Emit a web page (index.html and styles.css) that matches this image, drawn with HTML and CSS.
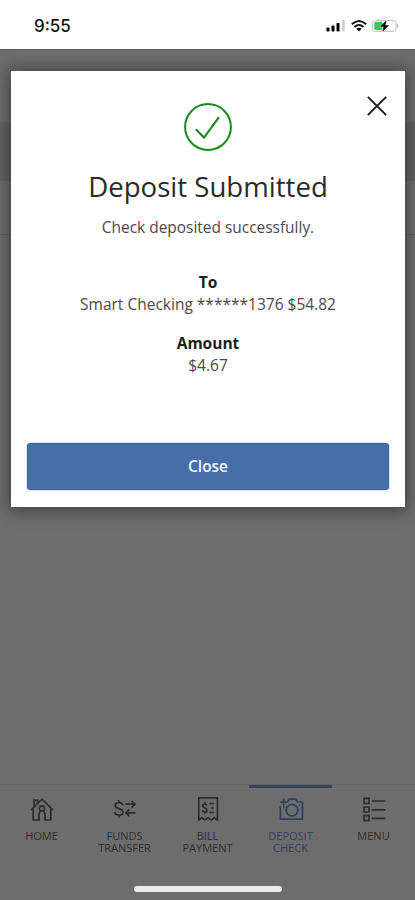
FILE: index.html
```
<!DOCTYPE html>
<html lang="en">
<head>
  <meta charset="UTF-8" />
  <meta name="viewport" content="width=device-width, initial-scale=1.0"/>
  <title>Deposit Check</title>
  <link rel="stylesheet" href="styles.css">
</head>
<body>
  <header class="status-bar">
    <span class="time">9:55</span>
    <div class="status-icons">
      <svg width="20" height="12" viewBox="0 0 20 12">
        <rect x="0.5" y="7.5" width="3" height="4" rx="0.8"/>
        <rect x="5.5" y="5.5" width="3" height="6" rx="0.8"/>
        <rect x="10.5" y="3" width="3" height="8.5" rx="0.8"/>
        <rect x="15.8" y="0" width="3" height="11.5" rx="0.8" fill="#d2d2d2"/>
      </svg>
      <svg width="16" height="12" viewBox="0 0 16 12">
        <g fill="none" stroke="#111" stroke-width="2">
          <path d="M0.8 4.3 Q8 -2.2 15.2 4.3"/>
          <path d="M3.4 7 Q8 2.9 12.6 7"/>
        </g>
        <path d="M5.3 8.8 Q8 6.8 10.7 8.8 L8 11.6 Z"/>
      </svg>
      <svg width="28" height="14" viewBox="0 0 28 14">
        <rect x="0.6" y="1.6" width="23.6" height="10.8" rx="3" fill="#fff" stroke="#bdbdbd" stroke-width="1"/>
        <path d="M25.2 4.8 Q27.6 7 25.2 9.2 Z" fill="#aaa"/>
        <rect x="2.3" y="3" width="8.5" height="8" rx="1.4" fill="#35c75a"/>
        <path d="M14.5 1.2 L8 7.8 H11.6 L10.4 12.8 L17 6.2 H13.3 Z" stroke="#fff" stroke-width="0.8" paint-order="stroke"/>
      </svg>
    </div>
  </header>

  <main class="page">
    <div class="page-head"></div>
    <div class="page-band"></div>
    <div class="page-row"></div>

    <section class="modal">
      <button class="modal-x" aria-label="Close">
        <svg width="20" height="20" viewBox="0 0 20 20" fill="none" stroke="#1c1c1c" stroke-width="1.9">
          <path d="M0.8 0.8 L19.2 19.2 M19.2 0.8 L0.8 19.2"/>
        </svg>
      </button>
      <svg class="check" width="48" height="48" viewBox="0 0 48 48" fill="none" stroke="#188a1b" stroke-width="2">
        <circle cx="24" cy="24" r="22.9"/>
        <path d="M11.8 26.3 L20 34.6 L35 14.2" stroke-width="2.1"/>
      </svg>
      <h1>Deposit Submitted</h1>
      <p class="message">Check deposited successfully.</p>
      <dl>
        <dt>To</dt>
        <dd>Smart Checking ******1376 $54.82</dd>
        <dt>Amount</dt>
        <dd>$4.67</dd>
      </dl>
      <button class="close-btn">Close</button>
    </section>
  </main>

  <nav class="tabs">
    <a class="tab">
      <svg width="26" height="26" viewBox="0 0 26 26">
        <path d="M2 14.2 L13 3.2 L24 14.2"/>
        <path d="M4.2 12.5 V24 H10 V17.5 M16 17.5 V24 H21.8 V12.5"/>
        <path d="M5 10.6 V4.2 H8.4 V7.4"/>
        <circle cx="13" cy="12.4" r="2.6"/>
        <path d="M11.2 15 L10 18 M14.8 15 L16 18"/>
      </svg>
      <span>HOME</span>
    </a>
    <a class="tab">
      <svg width="26" height="26" viewBox="0 0 26 26">
        <path d="M11 9.2 C10 5.6 3.2 5.8 3.2 9.4 C3.2 13.4 11 11.8 11 16.2 C11 20 3.6 20.2 2.6 16 M7 4.2 V6.4 M7 19.2 V21.8"/>
        <path d="M13.5 8.2 H23 M19.6 4.8 L23 8.2 L19.6 11.6"/>
        <path d="M23.4 16.8 H14 M17.4 13.4 L14 16.8 L17.4 20.2"/>
      </svg>
      <span>FUNDS<br>TRANSFER</span>
    </a>
    <a class="tab">
      <svg width="26" height="26" viewBox="0 0 26 26">
        <path d="M3.8 24 V1.8 H22.4 V24 L19.4 21.8 L16.3 24 L13.1 21.8 L9.9 24 L6.8 21.8 Z"/>
        <path d="M12 9.6 C11.4 7.4 7.6 7.6 7.6 9.8 C7.6 12.4 12 11.4 12 14.2 C12 16.6 7.8 16.6 7.2 14.2 M9.8 6 V8 M9.8 16 V18"/>
        <path d="M14.5 7.6 H19 M15.6 12 H19 M14.5 16.4 H19"/>
      </svg>
      <span>BILL<br>PAYMENT</span>
    </a>
    <a class="tab active">
      <svg width="26" height="26" viewBox="0 0 26 26">
        <path d="M8.8 6 H9.4 L11.2 3.2 H17.4 L19.4 6 H24.4 V23.2 H2.4 V10.2"/>
        <path d="M5.6 2.8 V9.4 M2.2 6.1 H8.8"/>
        <circle cx="14" cy="14.2" r="5.8"/>
        <path d="M20.8 9 H22.2 M5 10.9 H6.6"/>
      </svg>
      <span>DEPOSIT<br>CHECK</span>
    </a>
    <a class="tab">
      <svg width="26" height="26" viewBox="0 0 26 26">
        <path d="M3 2.4 H8 V7.4 H3 Z M3 11 H8 V16 H3 Z M3 19.6 H8 V24.6 H3 Z"/>
        <path d="M10.8 5 H24.6 M10.8 13.8 H24.6 M10.8 22.4 H24.6"/>
      </svg>
      <span>MENU</span>
    </a>
    <div class="home-indicator"></div>
  </nav>
</body>
</html>
```
FILE: styles.css
```
html, body {
  margin: 0;
  height: 100%;
}

body {
  display: flex;
  flex-direction: column;
  overflow: hidden;
  background: #6e6e6e;
  font-family: "Open Sans", "Noto Sans", sans-serif;
  color: #4a4a4a;
}

.status-bar {
  display: flex;
  justify-content: space-between;
  align-items: center;
  box-sizing: border-box;
  height: 49px;
  padding: 3px 15px 0 34px;
  background: #fff;
}

.time {
  font-family: Inter, sans-serif;
  font-size: 17px;
  font-weight: 500;
  color: #111;
}

.status-icons {
  display: flex;
  align-items: center;
  gap: 5px;
}

.page {
  position: relative;
  flex: 1;
  border-top: 1px solid #5c5c5c;
}

.page-head {
  height: 72px;
}

.page-band {
  height: 59px;
  background: #646464;
}

.page-row {
  height: 53px;
  border-bottom: 1px solid #646464;
}

/* dialog */
.modal {
  position: absolute;
  top: 21px;
  left: 11px;
  right: 10px;
  height: 436px;
  box-sizing: border-box;
  padding: 32px 16px 17px;
  display: flex;
  flex-direction: column;
  align-items: center;
  background: #fff;
  box-shadow: 0 1px 16px 3px rgba(0, 0, 0, 0.42);
}

.modal-x {
  position: absolute;
  top: 25px;
  right: 18px;
  padding: 0;
  border: none;
  background: none;
}

.modal-x svg,
.check {
  display: block;
}

.modal h1 {
  margin: 15px 0 0;
  font-size: 27.6px;
  line-height: 40px;
  font-weight: 400;
  color: #2a2a2a;
}

.message {
  margin: 10px 0 0;
  font-size: 15.45px;
  line-height: 22px;
}

.modal dl {
  margin: 33px 0 0;
  text-align: center;
  font-size: 15.5px;
  line-height: 22px;
}

.modal dt {
  font-weight: 700;
  color: #1c1c1c;
}

.modal dd {
  margin: 0 0 17px;
}

.close-btn {
  width: 100%;
  height: 47px;
  margin-top: auto;
  padding-bottom: 2px;
  border: 1px solid #3d659d;
  border-radius: 3px;
  background: #466fa8;
  color: #f3f7fc;
  font: 600 15.4px "Open Sans", sans-serif;
  box-shadow: 0 0 2px rgba(70, 111, 168, 0.6);
}

/* bottom navigation */
.tabs {
  position: relative;
  display: flex;
  height: 115px;
  background: #6d6d6d;
  box-shadow: 0 -1px 0 #656565;
}

.tab {
  flex: 1;
  display: flex;
  flex-direction: column;
  align-items: center;
  box-sizing: border-box;
  padding-top: 8px;
  border-top: 3px solid transparent;
  font-size: 11px;
  line-height: 11.5px;
  text-align: center;
  color: #2d2d2d;
}

.tab svg {
  margin-bottom: 8px;
  fill: none;
  stroke: currentColor;
  stroke-width: 1.7;
}

.tab.active {
  border-top-color: #34465f;
  color: #2e4060;
}

.home-indicator {
  position: absolute;
  left: 134px;
  bottom: 8px;
  width: 148px;
  height: 6px;
  border-radius: 3px;
  background: #ececec;
}
```
